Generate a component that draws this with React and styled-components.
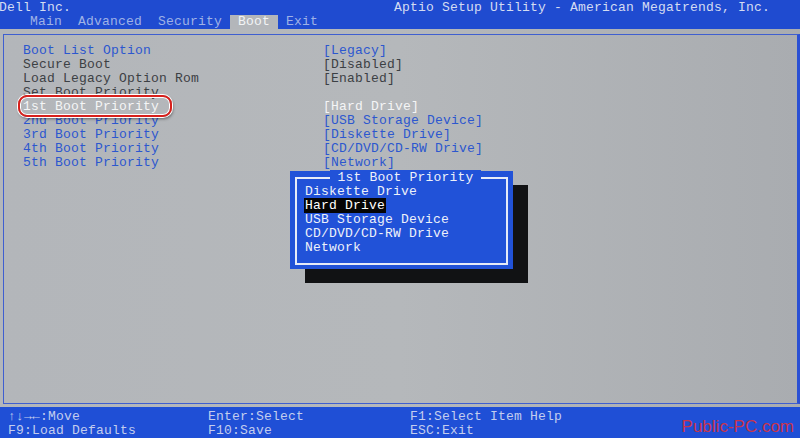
import React from 'react';
import styled, { createGlobalStyle } from 'styled-components';

const GlobalStyle = createGlobalStyle`
  html, body { margin: 0; padding: 0; background: #b1b4b8; }
  body { font-family: "Liberation Mono", "DejaVu Sans Mono", monospace; }
`;

const Screen = styled.div`
  width: 800px;
  height: 438px;
  display: flex;
  flex-direction: column;
  overflow: hidden;
  font-size: 13px;
  letter-spacing: 0.2px;
  line-height: 14px;
`;

const TitleBar = styled.div`
  background: #1f4bd0;
  color: #d4dcf2;
  display: flex;
  flex-direction: column;
`;

const TopRow = styled.div`
  height: 14px;
  display: flex;
  justify-content: space-between;
  padding: 1px 30px 0 0;
  margin-left: -1px;
`;

const TabRow = styled.div`
  height: 14px;
  display: flex;
  padding-left: 22px;
`;

const Tab = styled.div`
  padding: 0 8px;
  color: ${p => (p.active ? '#f2f4f6' : '#9fb2e6')};
  background: ${p => (p.active ? '#b3b6ba' : 'transparent')};
`;

const Body = styled.div`
  flex: 1;
  display: flex;
  padding: 5px 0 3px 3px;
  background: linear-gradient(90deg, #b3b6ba 0%, #b5b8bb 50%, #a9acb0 100%);
`;

const Panel = styled.div`
  flex: 1;
  position: relative;
  border: 1px solid #3f5fd0;
  border-right: 3px solid #2a50d4;
  padding: 9px 0 0 19px;
`;

const Settings = styled.div`
  display: grid;
  grid-template-columns: 300px 1fr;
  grid-auto-rows: 14px;
`;

const tones = {
  blue: '#2c57cf',
  dark: '#3c4044',
  white: '#f4f5f6',
};

const Cell = styled.div`
  color: ${p => tones[p.tone]};
  white-space: pre;
`;

const Circled = styled.span`
  position: relative;
  &::after {
    content: '';
    position: absolute;
    left: -5px;
    right: -13px;
    top: -4px;
    bottom: -3px;
    border: 2.5px solid #d8201c;
    border-radius: 9px;
    box-shadow: inset 0 0 0 1px #ffffff, 0 0 0 1px #ffffff, 1px 2px 3px rgba(0, 0, 0, 0.45);
  }
`;

const Popup = styled.div`
  position: absolute;
  left: 286px;
  top: 136px;
  width: 223px;
  height: 98px;
  background: #2152d8;
  box-shadow: 15px 14px 0 #111214;
  color: #eef1fa;
  padding: 14px 0 0 15px;
  box-sizing: border-box;
`;

const Frame = styled.div`
  position: absolute;
  left: 5px;
  right: 5px;
  top: 6px;
  bottom: 4px;
  border: 2px solid #e6ebf8;
  pointer-events: none;
`;

const PopupTitle = styled.div`
  position: absolute;
  top: 0;
  left: 0;
  right: 0;
  text-align: center;
  padding-left: 8px;
  span {
    background: #2152d8;
    padding: 0 7px;
  }
`;

const Option = styled.div`
  height: 14px;
  white-space: pre;
  span {
    background: ${p => (p.selected ? '#050505' : 'transparent')};
    color: ${p => (p.selected ? '#ffffff' : 'inherit')};
    padding: 0 1px;
    margin-left: -1px;
  }
`;

const Footer = styled.div`
  height: 31px;
  position: relative;
  background: #1f4fd6;
  color: #c3cdee;
  display: grid;
  grid-template-columns: 200px 202px 1fr;
  grid-auto-rows: 14px;
  padding: 3px 0 0 8px;
  box-sizing: border-box;
`;

const Watermark = styled.div`
  position: absolute;
  right: 6px;
  bottom: 1px;
  font-family: "Liberation Sans", Arial, sans-serif;
  font-size: 17px;
  line-height: 20px;
  letter-spacing: 0;
  color: #c8344c;
`;

const rows = [
  ['Boot List Option', '[Legacy]', 'blue', 'blue'],
  ['Secure Boot', '[Disabled]', 'dark', 'dark'],
  ['Load Legacy Option Rom', '[Enabled]', 'dark', 'dark'],
  ['Set Boot Priority', '', 'dark', 'dark'],
  ['1st Boot Priority', '[Hard Drive]', 'white', 'white', true],
  ['2nd Boot Priority', '[USB Storage Device]', 'blue', 'blue'],
  ['3rd Boot Priority', '[Diskette Drive]', 'blue', 'blue'],
  ['4th Boot Priority', '[CD/DVD/CD-RW Drive]', 'blue', 'blue'],
  ['5th Boot Priority', '[Network]', 'blue', 'blue'],
];

const options = ['Diskette Drive', 'Hard Drive', 'USB Storage Device', 'CD/DVD/CD-RW Drive', 'Network'];

export default function App() {
  return (
    <Screen>
      <GlobalStyle />
      <TitleBar>
        <TopRow>
          <span>Dell Inc.</span>
          <span>Aptio Setup Utility - American Megatrends, Inc.</span>
        </TopRow>
        <TabRow>
          <Tab>Main</Tab>
          <Tab>Advanced</Tab>
          <Tab>Security</Tab>
          <Tab active>Boot</Tab>
          <Tab>Exit</Tab>
        </TabRow>
      </TitleBar>
      <Body>
        <Panel>
          <Settings>
            {rows.map(([label, value, lt, vt, circled]) => (
              <React.Fragment key={label}>
                <Cell tone={lt}>{circled ? <Circled>{label}</Circled> : label}</Cell>
                <Cell tone={vt}>{value}</Cell>
              </React.Fragment>
            ))}
          </Settings>
          <Popup>
            <Frame />
            <PopupTitle><span>1st Boot Priority</span></PopupTitle>
            {options.map(o => (
              <Option key={o} selected={o === 'Hard Drive'}><span>{o}</span></Option>
            ))}
          </Popup>
        </Panel>
      </Body>
      <Footer>
        <span>↑↓→←:Move</span>
        <span>Enter:Select</span>
        <span>F1:Select Item Help</span>
        <span>F9:Load Defaults</span>
        <span>F10:Save</span>
        <span>ESC:Exit</span>
        <Watermark>Public-PC.com</Watermark>
      </Footer>
    </Screen>
  );
}
